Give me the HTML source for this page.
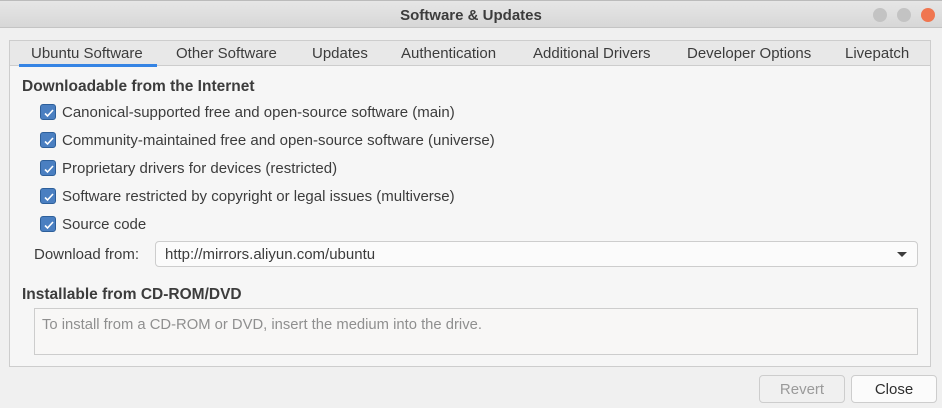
<!DOCTYPE html>
<html><head><style>
*{margin:0;padding:0;box-sizing:border-box}
body{width:942px;height:408px;background:#f0f0f0;font-family:"Liberation Sans","DejaVu Sans",sans-serif;font-size:15px;color:#3c3c3c;position:relative;overflow:hidden}
.title{position:absolute;left:0;top:0;width:942px;height:28px;background:linear-gradient(#e6e6e6,#d7d7d7);border-bottom:1px solid #c4c4c4;border-top:1px solid #bbb;text-align:center;line-height:30px;font-weight:bold;font-size:15px;color:#3c3c3c}
.dot{position:absolute;top:7px;width:14px;height:14px;border-radius:50%;background:#c3c3c3}
.nb{position:absolute;left:9px;top:40px;width:922px;height:327px;border:1px solid #cdcdcd;background:#f6f6f6}
.tabs{position:absolute;left:0;top:0;width:920px;height:25px;background:#e8e8e8;border-bottom:1px solid #cdcdcd}
.tab{position:absolute;top:4px;font-size:15px;color:#3c3c3c}
.ul{position:absolute;left:9px;top:23px;width:138px;height:3px;background:#3584e4}
.h{position:absolute;font-weight:bold;font-size:15.5px;color:#3c3c3c}
.cb{position:absolute;left:40px;width:16px;height:16px;border-radius:3px;background:#4a7fc1;border:1px solid #2d5f9a}
.cb svg{position:absolute;left:2px;top:2px}
.lbl{position:absolute;left:62px;font-size:15px}
.combo{position:absolute;left:155px;top:241px;width:763px;height:26px;border:1px solid #cdcdcd;border-radius:4px;background:#fbfbfb;line-height:26px;padding-left:9px}
.combo:after{content:"";position:absolute;right:10px;top:10px;border-left:5px solid transparent;border-right:5px solid transparent;border-top:5px solid #3c3c3c}
.cd{position:absolute;left:34px;top:308px;width:884px;height:47px;border:1px solid #cdcdcd;background:#f8f7f6;padding:8px 7px;color:#8f8f8f;font-size:14.8px}
.btn{position:absolute;top:375px;height:28px;border:1px solid #cdcdcd;border-radius:4px;text-align:center;line-height:28px;font-size:15px}
</style></head><body>
<div class="title">Software &amp; Updates
<div class="dot" style="left:873px"></div><div class="dot" style="left:897px"></div><div class="dot" style="left:921px;background:#f07650"></div></div>
<div class="nb">
<div class="tabs">
<span class="tab" style="left:21px">Ubuntu Software</span>
<span class="tab" style="left:166px">Other Software</span>
<span class="tab" style="left:302px">Updates</span>
<span class="tab" style="left:391px">Authentication</span>
<span class="tab" style="left:523px">Additional Drivers</span>
<span class="tab" style="left:677px">Developer Options</span>
<span class="tab" style="left:835px">Livepatch</span>
<div class="ul"></div>
</div></div>
<div class="h" style="left:22px;top:78px">Downloadable from the Internet</div>
<div class="cb" style="top:104px"><svg width="12" height="12"><path d="M2 6.5l2.5 2.5L10 3" stroke="#fff" stroke-width="1.6" fill="none"/></svg></div>
<div class="lbl" style="top:104px">Canonical-supported free and open-source software (main)</div>
<div class="cb" style="top:132px"><svg width="12" height="12"><path d="M2 6.5l2.5 2.5L10 3" stroke="#fff" stroke-width="1.6" fill="none"/></svg></div>
<div class="lbl" style="top:132px">Community-maintained free and open-source software (universe)</div>
<div class="cb" style="top:160px"><svg width="12" height="12"><path d="M2 6.5l2.5 2.5L10 3" stroke="#fff" stroke-width="1.6" fill="none"/></svg></div>
<div class="lbl" style="top:160px">Proprietary drivers for devices (restricted)</div>
<div class="cb" style="top:188px"><svg width="12" height="12"><path d="M2 6.5l2.5 2.5L10 3" stroke="#fff" stroke-width="1.6" fill="none"/></svg></div>
<div class="lbl" style="top:188px">Software restricted by copyright or legal issues (multiverse)</div>
<div class="cb" style="top:216px"><svg width="12" height="12"><path d="M2 6.5l2.5 2.5L10 3" stroke="#fff" stroke-width="1.6" fill="none"/></svg></div>
<div class="lbl" style="top:216px">Source code</div>
<div class="lbl" style="left:34px;top:246px">Download from:</div>
<div class="combo">http://mirrors.aliyun.com/ubuntu</div>
<div class="h" style="left:22px;top:286px">Installable from CD-ROM/DVD</div>
<div class="cd">To install from a CD-ROM or DVD, insert the medium into the drive.</div>
<div class="btn" style="left:759px;width:86px;color:#9a9a9a;background:#f0f0f0">Revert</div>
<div class="btn" style="left:851px;width:86px;background:#fbfbfb;color:#2e2e2e">Close</div>
</body></html>
